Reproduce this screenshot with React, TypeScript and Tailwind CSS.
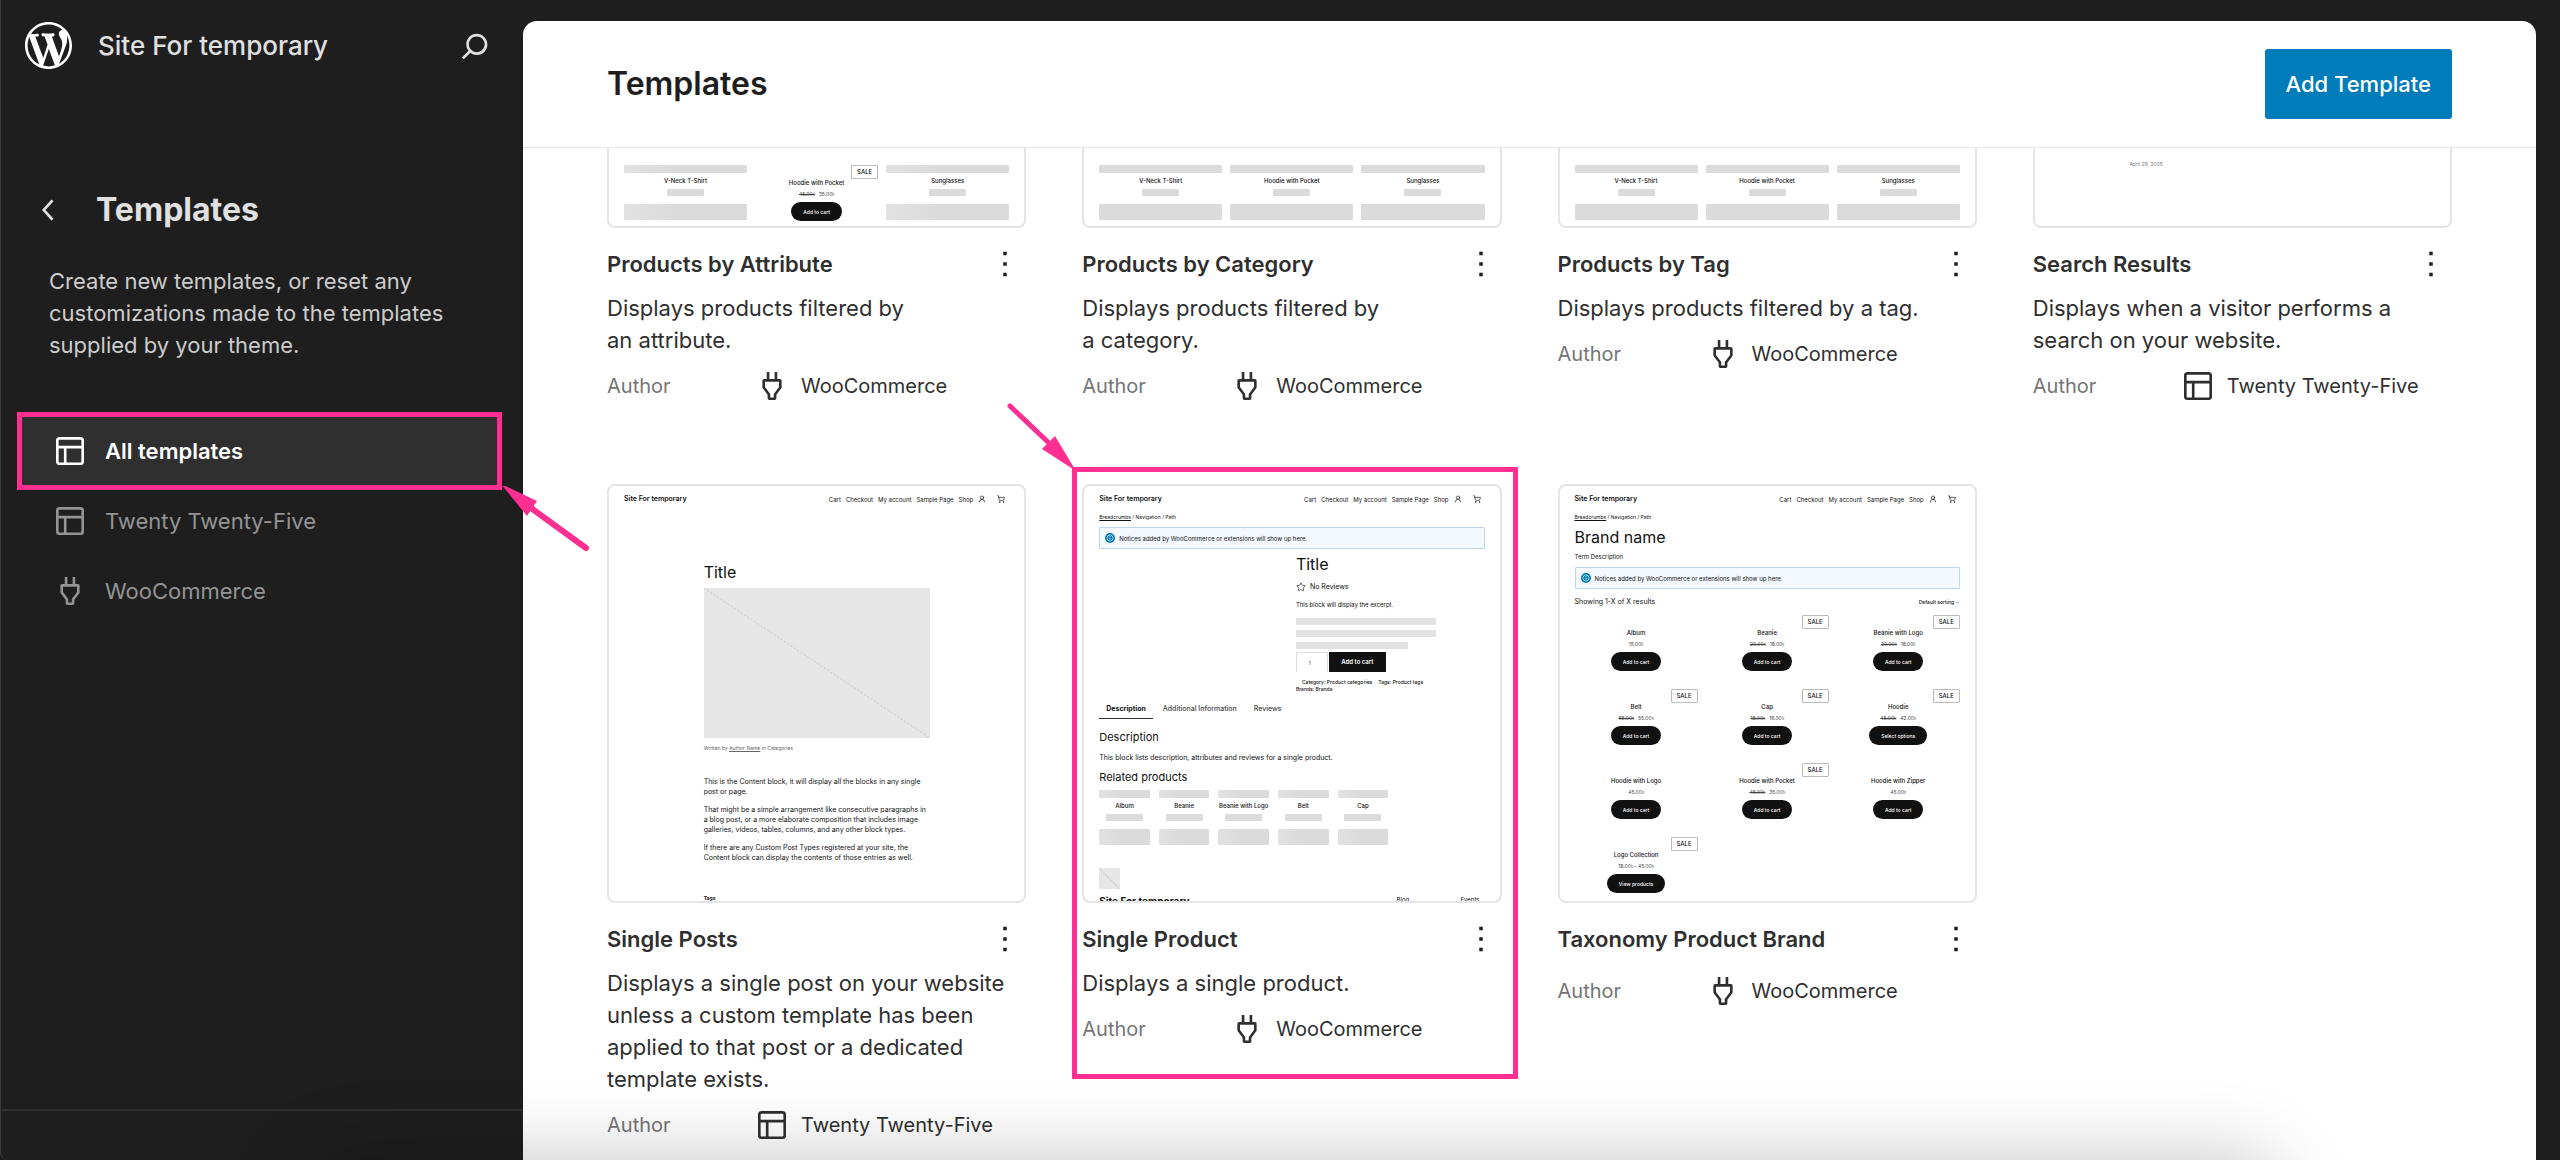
import type { ReactNode } from "react";
import clsx from "clsx";
import { ChevronDown, ShoppingCart, Star, UserRound } from "lucide-react";

const ICONS = {
    layout: "M18 5.5H6a.5.5 0 00-.5.5v3h13V6a.5.5 0 00-.5-.5zm.5 5H10v8h8a.5.5 0 00.5-.5v-7.5zm-10 0h-3V18a.5.5 0 00.5.5h2.5v-8zM6 4h12a2 2 0 012 2v12a2 2 0 01-2 2H6a2 2 0 01-2-2V6a2 2 0 012-2z",
    plugin: "M10.5 4v4h3V4H15v4h1.5a1 1 0 011 1v4l-3 4v2a1 1 0 01-1 1h-3a1 1 0 01-1-1v-2l-3-4V9a1 1 0 011-1H9V4h1.5zm.5 12.5v2h2v-2l3-4v-3H8v3l3 4z",
    search: "M13 5c-3.3 0-6 2.7-6 6 0 1.4.5 2.7 1.3 3.7l-3.8 3.8 1.1 1.1 3.8-3.8c1 .8 2.3 1.3 3.7 1.3 3.3 0 6-2.7 6-6S16.3 5 13 5zm0 10.5c-2.5 0-4.5-2-4.5-4.5s2-4.5 4.5-4.5 4.5 2 4.5 4.5-2 4.5-4.5 4.5z",
    back: "M14.6 7l-1.2-1L8 12l5.4 6 1.2-1-4.6-5z",
    more: "M13 19h-2v-2h2v2zm0-6h-2v-2h2v2zm0-6h-2V5h2v2z",
};

type IconName = keyof typeof ICONS;

const Icon = ({ name }: { name: IconName }) => (
    <svg viewBox="0 0 24 24" className="size-[42px] shrink-0" fill="currentColor" fillRule="evenodd" aria-hidden="true">
        <path d={ICONS[name]} />
    </svg>
);

const WordPressLogo = () => (
    <svg viewBox="0 0 20 20" className="size-[47px]" fill="currentColor" aria-hidden="true">
        <path d="M20 10c0-5.51-4.49-10-10-10C4.48 0 0 4.49 0 10c0 5.52 4.48 10 10 10 5.51 0 10-4.48 10-10zM7.78 15.37L4.37 6.22c.55-.02 1.17-.08 1.17-.08.5-.06.44-1.13-.06-1.11 0 0-1.45.11-2.37.11-.18 0-.37 0-.58-.01C4.12 2.69 6.87 1.11 10 1.11c2.33 0 4.45.87 6.05 2.34-.68-.11-1.65.39-1.65 1.58 0 .74.45 1.36.9 2.1.35.61.55 1.36.55 2.46 0 1.49-1.4 5-1.4 5l-3.03-8.37c.54-.02.82-.17.82-.17.5-.05.44-1.25-.06-1.22 0 0-1.44.12-2.38.12-.87 0-2.33-.12-2.33-.12-.5-.03-.56 1.2-.06 1.22l.92.08 1.26 3.41zM17.41 10c.24-.64.74-1.87.43-4.25.7 1.29 1.05 2.71 1.05 4.25 0 3.29-1.73 6.24-4.4 7.78.97-2.59 1.94-5.2 2.92-7.78zM6.1 18.09C3.12 16.65 1.11 13.53 1.11 10c0-1.3.23-2.48.72-3.59C3.25 10.3 4.67 14.2 6.1 18.09zm4.03-6.63l2.58 6.98c-.86.29-1.76.45-2.71.45-.79 0-1.57-.11-2.29-.33.81-2.38 1.62-4.74 2.42-7.1z" />
    </svg>
);

/* ---------- Sidebar ---------- */

const NAV: { label: string; icon: IconName; active?: boolean }[] = [
    { label: "All templates", icon: "layout", active: true },
    { label: "Twenty Twenty-Five", icon: "layout" },
    { label: "WooCommerce", icon: "plugin" },
];

const Sidebar = () => (
    <aside className="relative z-10 flex w-[523px] shrink-0 flex-col rounded-bl-lg border-l border-[#3a3a3a]">
        <div className="flex h-[91px] items-center pl-6 pr-[27px]">
            <a href="#dashboard" aria-label="Dashboard" className="text-white">
                <WordPressLogo />
            </a>
            <a href="#site" className="ml-[26px] text-[26px] font-medium text-[#e0e0e0]">Site For temporary</a>
            <button type="button" aria-label="Search" className="ml-auto text-[#e0e0e0]">
                <Icon name="search" />
            </button>
        </div>

        <div className="mt-[98px] flex items-center gap-[26px] pl-[27px]">
            <button type="button" aria-label="Back" className="text-[#e0e0e0]">
                <Icon name="back" />
            </button>
            <h1 className="text-[32px] leading-[42px] font-bold text-[#e0e0e0]">Templates</h1>
        </div>
        <p className="mt-[34px] pl-12 pr-14 text-[22px] leading-8 text-[#ccc]">
            Create new templates, or reset any customizations made to the templates supplied by your theme.
        </p>

        <nav className="mt-[55px] ml-5 mr-[25px]">
            {NAV.map((item) => (
                <div key={item.label} className="relative">
                    <a
                        href="#templates"
                        className={clsx(
                            "flex h-[70px] items-center gap-3.5 pl-7 text-[22px]",
                            item.active ? "bg-[#2f2f2f] font-semibold text-white" : "text-[#949494]",
                        )}
                    >
                        <Icon name={item.icon} />
                        {item.label}
                    </a>
                    {item.active && (
                        <>
                            <div className="pointer-events-none absolute -inset-1 border-5 border-[#ff2f92]" />
                            <svg viewBox="0 0 92 70" className="absolute top-full left-full h-[70px] w-[92px]" fill="#ff2f92" aria-hidden="true">
                                <path d="M3 -2L39 15L29 30Z" />
                                <path d="M33 22L88 62" stroke="#ff2f92" strokeWidth="6" strokeLinecap="round" />
                            </svg>
                        </>
                    )}
                </div>
            ))}
        </nav>
        <div className="mt-auto h-[51px] border-t-2 border-[#2f2f2f]" />
    </aside>
);

/* ---------- Miniature page previews ---------- */

const SiteHeader = () => (
    <div className="flex h-[26px] items-center justify-between pr-1">
        <span className="text-[7px] font-semibold">Site For temporary</span>
        <div className="flex items-center gap-[5px] text-[6px]">
            <span>Cart</span>
            <span>Checkout</span>
            <span>My account</span>
            <span>Sample Page</span>
            <span>Shop</span>
            <UserRound size={8} />
            <ShoppingCart size={8} className="ml-1.5" />
        </div>
    </div>
);

const Breadcrumbs = () => (
    <div className="text-[5px] leading-[10px]">
        <span className="underline">Breadcrumbs</span> / Navigation / Path
    </div>
);

const Notice = () => (
    <div className="mt-[5px] flex h-[22px] items-center gap-1 rounded-[1px] border border-[#bcd8ee] bg-[#f4f8ff] pl-[5px] text-[6px]">
        <svg viewBox="0 0 10 10" className="size-2.5" aria-hidden="true">
            <circle cx="5" cy="5" r="5" fill="#007cba" />
            <circle cx="5" cy="5" r="3" fill="none" stroke="#fff" strokeWidth=".6" />
            <path d="M5 3.2v.8M5 4.6v2.2" stroke="#fff" strokeWidth=".8" />
        </svg>
        Notices added by WooCommerce or extensions will show up here.
    </div>
);

const SkeletonProduct = ({ name, shaded }: { name: string; shaded?: boolean }) => {
    const tone = shaded ? "bg-linear-to-r from-[#e2e2e2] to-[#dbdbdb] to-40%" : "bg-[#dbdbdb]";
    return (
        <div className="flex flex-col items-center">
            <div className={clsx("h-2 w-full rounded-[1px]", tone)} />
            <div className="mt-1 text-[6px] leading-[8px] font-medium whitespace-nowrap">{name}</div>
            <div className="mt-1 h-[7px] w-[37px] rounded-[1px] bg-[#dbdbdb]" />
            <div className={clsx("mt-2 h-4 w-full rounded-[1px]", tone)} />
        </div>
    );
};

type Product = { name: string; price: string; was?: string; sale?: boolean; action?: string };

const ProductCell = ({ name, price, was, sale, action = "Add to cart" }: Product) => (
    <div className="flex flex-col items-center">
        <div className="flex h-3.5 w-full justify-end">
            {sale && (
                <span className="w-[27px] rounded-[1px] border border-[#bbb] text-center text-[6px] leading-[12px] font-medium">SALE</span>
            )}
        </div>
        <div className="text-[6px] leading-[8px] font-medium">{name}</div>
        <div className="mt-1 flex gap-1 text-[5px] leading-[6px] text-[#444]">
            {was && <s>{was}</s>}
            <span>{price}</span>
        </div>
        <button type="button" className="mt-[5px] h-[19px] rounded-full bg-[#111] px-3 text-[5px] leading-[8px] font-medium text-white">
            {action}
        </button>
    </div>
);

const NAMES = ["V-Neck T-Shirt", "Hoodie with Pocket", "Sunglasses"];

const ProductsPreview = ({ sale }: { sale?: boolean }) => (
    <div className="grid grid-cols-3 gap-2 pt-[17px]">
        {NAMES.map((name, i) =>
            sale && i === 1 ? (
                <ProductCell key={name} name={name} was="45.00৳" price="35.00৳" sale />
            ) : (
                <SkeletonProduct key={name} name={name} shaded={sale} />
            ),
        )}
    </div>
);

const SearchPreview = () => (
    <div className="mx-auto w-[226px] pt-3 text-[5px] leading-[8px] text-[#777]">April 29, 2025</div>
);

const SinglePostPreview = () => (
    <>
        <SiteHeader />
        <div className="mx-auto w-[226px] text-[7px] leading-[10px] whitespace-nowrap">
            <div className="mt-[50px] text-base leading-[20px]">Title</div>
            <svg viewBox="0 0 226 150" className="mt-1.5 h-[150px] w-full bg-[#e6e6e6]" aria-hidden="true">
                <path d="M0 0L226 150" stroke="#c8c8c8" strokeDasharray="2 2" />
            </svg>
            <div className="mt-[5px] text-[5px] leading-[10px] text-[#666]">
                Written by <span className="underline">Author Name</span> in Categories
            </div>
            <div className="mt-6 space-y-2">
                <p>
                    This is the Content block, it will display all the blocks in any single<br />
                    post or page.
                </p>
                <p>
                    That might be a simple arrangement like consecutive paragraphs in<br />
                    a blog post, or a more elaborate composition that includes image<br />
                    galleries, videos, tables, columns, and any other block types.
                </p>
                <p>
                    If there are any Custom Post Types registered at your site, the<br />
                    Content block can display the contents of those entries as well.
                </p>
            </div>
            <div className="mt-[30px] text-[5px] leading-[10px] font-bold">Tags</div>
        </div>
    </>
);

const SingleProductPreview = () => (
    <>
        <SiteHeader />
        <Breadcrumbs />
        <Notice />
        <div className="mt-[5px] grid grid-cols-2 gap-2 text-[6px] leading-[10px]">
            <div className="col-start-2">
                <div className="text-base leading-[20px]">Title</div>
                <div className="mt-2 flex items-center gap-1 text-[7px] leading-[10px]">
                    <Star size={10} strokeWidth={1.5} />
                    No Reviews
                </div>
                <div className="mt-2">This block will display the excerpt.</div>
                <div className="mt-2 space-y-[5px]">
                    <div className="h-[7px] w-[140px] rounded-[1px] bg-[#e2e2e2]" />
                    <div className="h-[7px] w-[140px] rounded-[1px] bg-[#e2e2e2]" />
                    <div className="h-[7px] w-28 rounded-[1px] bg-[#e2e2e2]" />
                </div>
                <div className="mt-[3px] flex h-5 gap-px">
                    <input
                        aria-label="Quantity"
                        defaultValue="1"
                        className="w-8 border border-b-0 border-[#ddd] pr-1 text-center text-[5px] text-[#444]"
                    />
                    <button type="button" className="w-[57px] bg-[#111] text-[6px] font-semibold text-white">Add to cart</button>
                </div>
                <div className="mt-[7px] text-[5px] leading-[7px] font-medium">
                    <div className="flex gap-1.5 pl-1.5">
                        <span>Category: Product categories</span>
                        <span>Tags: Product tags</span>
                    </div>
                    <div>Brands: Brands</div>
                </div>
            </div>
        </div>
        <div className="mt-[11px] flex gap-2.5 text-[7px] leading-[10px] font-medium text-[#444]">
            <span className="border-b border-[#333] px-[7px] pb-1 font-bold text-[#111]">Description</span>
            <span className="pr-[7px]">Additional Information</span>
            <span>Reviews</span>
        </div>
        <div className="mt-3 text-[11px] leading-[12px]">Description</div>
        <div className="mt-2.5 text-[7px] leading-[10px]">
            This block lists description, attributes and reviews for a single product.
        </div>
        <div className="mt-2 text-[11px] leading-[12px]">Related products</div>
        <div className="mt-[7px] grid w-3/4 grid-cols-5 gap-[9px]">
            {["Album", "Beanie", "Beanie with Logo", "Belt", "Cap"].map((name) => (
                <SkeletonProduct key={name} name={name} shaded />
            ))}
        </div>
        <svg viewBox="0 0 21 21" className="mt-[23px] size-[21px] bg-[#e6e6e6]" aria-hidden="true">
            <path d="M0 0L21 21" stroke="#d0d0d0" />
        </svg>
        <div className="mt-1.5 flex text-[6px] leading-[10px]">
            <span className="mr-auto text-[10px] leading-[12px] font-bold">Site For temporary</span>
            <span className="w-16">Blog</span>
            <span className="w-6">Events</span>
        </div>
    </>
);

const PRODUCTS: Product[] = [
    { name: "Album", price: "15.00৳" },
    { name: "Beanie", was: "20.00৳", price: "18.00৳", sale: true },
    { name: "Beanie with Logo", was: "20.00৳", price: "18.00৳", sale: true },
    { name: "Belt", was: "65.00৳", price: "55.00৳", sale: true },
    { name: "Cap", was: "18.00৳", price: "16.00৳", sale: true },
    { name: "Hoodie", was: "45.00৳", price: "42.00৳", sale: true, action: "Select options" },
    { name: "Hoodie with Logo", price: "45.00৳" },
    { name: "Hoodie with Pocket", was: "45.00৳", price: "35.00৳", sale: true },
    { name: "Hoodie with Zipper", price: "45.00৳" },
    { name: "Logo Collection", price: "18.00৳ – 45.00৳", sale: true, action: "View products" },
];

const BrandPreview = () => (
    <>
        <SiteHeader />
        <Breadcrumbs />
        <div className="mt-[5px] text-base leading-[20px]">Brand name</div>
        <div className="mt-[5px] text-[6px] leading-[10px]">Term Description</div>
        <Notice />
        <div className="mt-2 flex items-center justify-between text-[7px] leading-[10px]">
            <span>Showing 1-X of X results</span>
            <div className="flex items-center">
                <select aria-label="Sort by" className="appearance-none text-[5px] leading-[10px] font-medium">
                    <option>Default sorting</option>
                </select>
                <ChevronDown size={5} />
            </div>
        </div>
        <div className="mt-2 grid grid-cols-3 gap-x-2 gap-y-[18px]">
            {PRODUCTS.map((product) => (
                <ProductCell key={product.name} {...product} />
            ))}
        </div>
    </>
);

/* ---------- Template cards ---------- */

type Template = {
    title: string;
    description?: string;
    author: "WooCommerce" | "Twenty Twenty-Five";
    preview: ReactNode;
    cut?: boolean;
    marked?: boolean;
};

const TEMPLATES: Template[] = [
    {
        title: "Products by Attribute",
        description: "Displays products filtered by an attribute.",
        author: "WooCommerce",
        preview: <ProductsPreview sale />,
        cut: true,
    },
    {
        title: "Products by Category",
        description: "Displays products filtered by a category.",
        author: "WooCommerce",
        preview: <ProductsPreview />,
        cut: true,
    },
    {
        title: "Products by Tag",
        description: "Displays products filtered by a tag.",
        author: "WooCommerce",
        preview: <ProductsPreview />,
        cut: true,
    },
    {
        title: "Search Results",
        description: "Displays when a visitor performs a search on your website.",
        author: "Twenty Twenty-Five",
        preview: <SearchPreview />,
        cut: true,
    },
    {
        title: "Single Posts",
        description:
            "Displays a single post on your website unless a custom template has been applied to that post or a dedicated template exists.",
        author: "Twenty Twenty-Five",
        preview: <SinglePostPreview />,
    },
    {
        title: "Single Product",
        description: "Displays a single product.",
        author: "WooCommerce",
        preview: <SingleProductPreview />,
        marked: true,
    },
    {
        title: "Taxonomy Product Brand",
        author: "WooCommerce",
        preview: <BrandPreview />,
    },
];

const TemplateCard = ({ title, description, author, preview, cut, marked }: Template) => (
    <article className="relative text-[#2f2f2f]">
        <div
            className={clsx(
                "overflow-hidden border-2 border-[#e5e5e5] bg-white px-[15px] text-[#111]",
                cut ? "h-20 rounded-b-lg border-t-0" : "aspect-square rounded-lg",
            )}
        >
            {preview}
        </div>
        <div className="mt-3 flex h-12 items-center justify-between">
            <h3 className="text-[22px] font-semibold">{title}</h3>
            <button type="button" aria-label={`Actions for ${title}`} className="text-[#1e1e1e]">
                <Icon name="more" />
            </button>
        </div>
        {description && <p className="pt-1 pb-0.5 text-[22px] leading-8 text-pretty">{description}</p>}
        <div className="mt-2 flex h-10 items-center text-xl">
            <span className="w-36 shrink-0 text-[#757575]">Author</span>
            <span className="flex items-center gap-2">
                <Icon name={author === "WooCommerce" ? "plugin" : "layout"} />
                {author}
            </span>
        </div>
        {marked && (
            <>
                <div className="pointer-events-none absolute -top-[17px] -right-4 -bottom-[30px] -left-2.5 border-5 border-[#ff2f92]" />
                <svg viewBox="0 0 80 80" className="absolute right-full bottom-full mb-1.5 size-20" fill="#ff2f92" aria-hidden="true">
                    <path d="M74 73L40 51L53 38Z" />
                    <path d="M8 8L48 46" stroke="#ff2f92" strokeWidth="5" strokeLinecap="round" />
                </svg>
            </>
        )}
    </article>
);

export default function App() {
    return (
        <div className="relative flex h-screen overflow-hidden bg-[#1e1e1e] font-[Inter,sans-serif]">
            <Sidebar />
            <main className="mt-[21px] mr-6 flex min-w-0 flex-1 flex-col overflow-hidden rounded-t-[14px] bg-white">
                <header className="flex h-[127px] shrink-0 items-center justify-between border-b border-[#e8e8e8] px-[84px]">
                    <h2 className="text-[32px] font-semibold text-[#1e1e1e]">Templates</h2>
                    <button type="button" className="h-[70px] rounded-[3px] bg-[#007cba] px-[21px] text-[22px] font-medium text-white">
                        Add Template
                    </button>
                </header>
                <div className="grid grid-cols-4 items-start gap-x-14 gap-y-[78px] px-[84px]">
                    {TEMPLATES.map((template) => (
                        <TemplateCard key={template.title} {...template} />
                    ))}
                </div>
            </main>
            {/* soft shadow rising from below the window */}
            <div className="pointer-events-none absolute top-full right-[11%] left-[12%] z-20 h-40 rounded-[40px] shadow-[0_0_80px_rgba(0,0,0,0.24)]" />
        </div>
    );
}
